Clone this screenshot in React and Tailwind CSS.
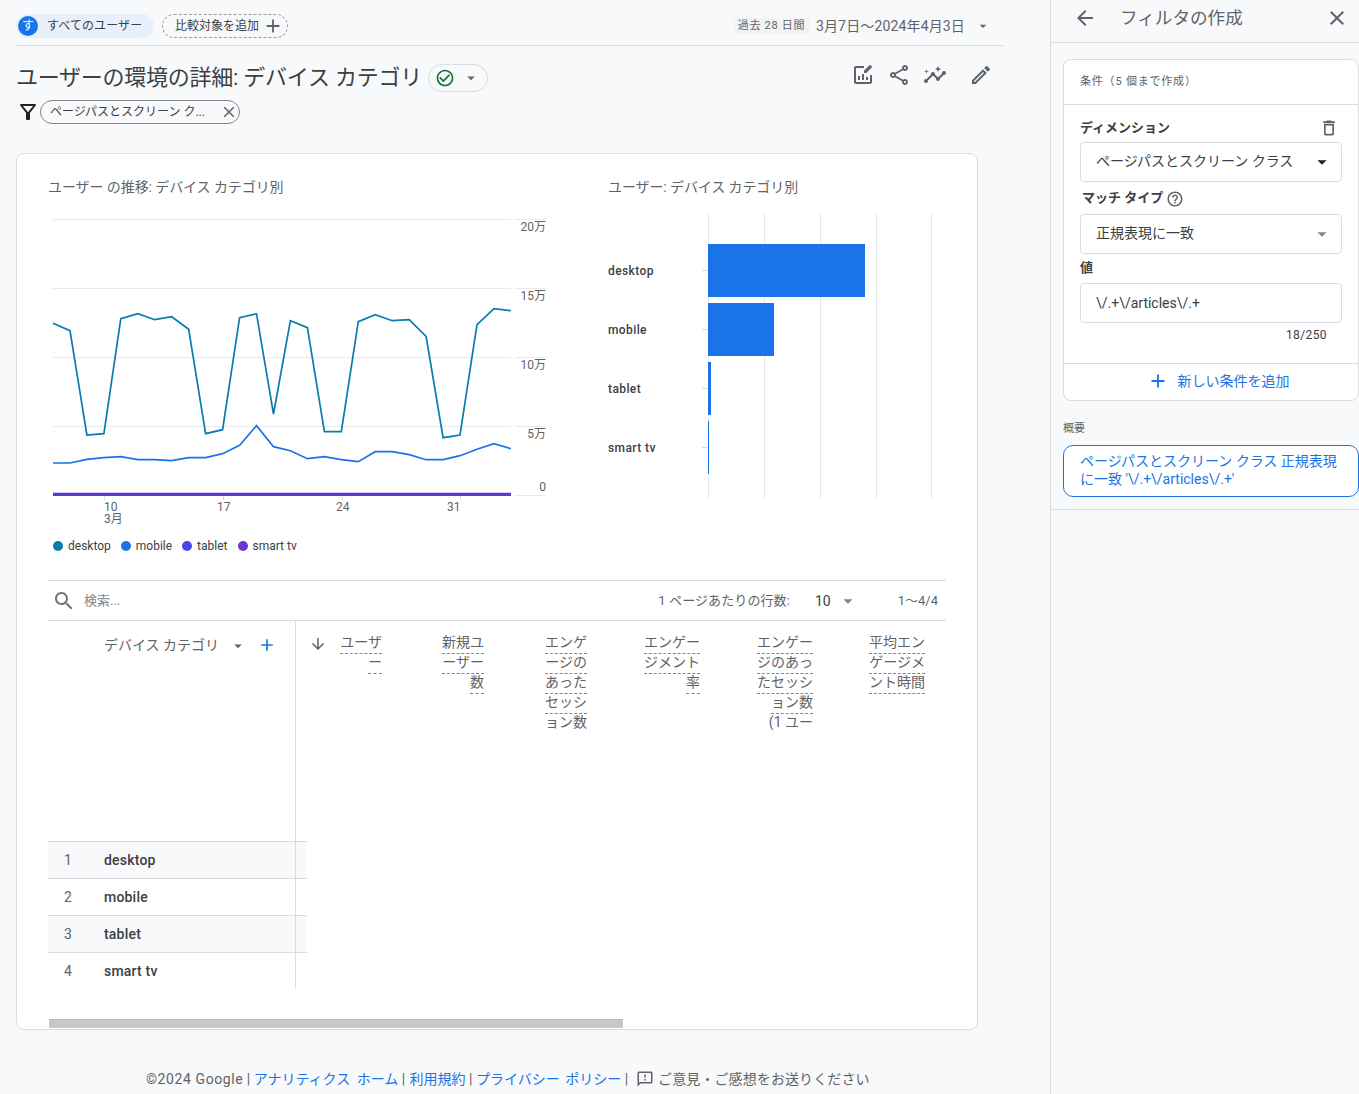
import React from "react";

const paths = {
  close: "M19 6.41L17.59 5 12 10.59 6.41 5 5 6.41 10.59 12 5 17.59 6.41 19 12 13.41 17.59 19 19 17.59 13.41 12z",
  back: "M20 11H7.83l5.59-5.59L12 4l-8 8 8 8 1.41-1.41L7.83 13H20v-2z",
  caret: "M7 10l5 5 5-5z",
  add: "M19 13h-6v6h-2v-6H5v-2h6V5h2v6h6v2z",
  down: "M20 12l-1.41-1.41L13 16.17V4h-2v12.17l-5.58-5.59L4 12l8 8 8-8z",
  search: "M15.5 14h-.79l-.28-.27C15.41 12.59 16 11.11 16 9.5 16 5.91 13.09 3 9.5 3S3 5.91 3 9.5 5.91 16 9.5 16c1.61 0 3.09-.59 4.23-1.57l.27.28v.79l5 4.99L20.49 19l-4.99-5zm-6 0C7.01 14 5 11.99 5 9.5S7.01 5 9.5 5 14 7.01 14 9.5 11.99 14 9.5 14z",
  share: "M18 16.08c-.76 0-1.44.3-1.96.77L8.91 12.7c.05-.23.09-.46.09-.7s-.04-.47-.09-.7l7.05-4.11c.54.5 1.25.81 2.04.81 1.66 0 3-1.34 3-3s-1.34-3-3-3-3 1.34-3 3c0 .24.04.47.09.7L8.04 9.81C7.5 9.31 6.79 9 6 9c-1.66 0-3 1.34-3 3s1.34 3 3 3c.79 0 1.5-.31 2.04-.81l7.12 4.16c-.05.21-.08.43-.08.65 0 1.61 1.31 2.92 2.92 2.92s2.92-1.31 2.92-2.92c0-1.61-1.31-2.92-2.92-2.92zM18 4c.55 0 1 .45 1 1s-.45 1-1 1-1-.45-1-1 .45-1 1-1zM6 13c-.55 0-1-.45-1-1s.45-1 1-1 1 .45 1 1-.45 1-1 1zm12 7.02c-.55 0-1-.45-1-1s.45-1 1-1 1 .45 1 1-.45 1-1 1z",
  edit: "M14.06 9.02l.92.92L5.92 19H5v-.92l9.06-9.06M17.66 3c-.25 0-.51.1-.7.29l-1.83 1.83 3.75 3.75 1.83-1.83c.39-.39.39-1.02 0-1.41l-2.34-2.34c-.2-.2-.45-.29-.71-.29zm-3.6 3.19L3 17.25V21h3.75L17.81 9.94l-3.75-3.75z",
  insights: "M21 8c-1.45 0-2.26 1.44-1.93 2.51l-3.55 3.56c-.3-.09-.74-.09-1.04 0l-2.55-2.55C12.27 10.45 11.46 9 10 9c-1.45 0-2.27 1.44-1.93 2.52l-4.56 4.55C2.44 15.74 1 16.55 1 18c0 1.1.9 2 2 2 1.45 0 2.26-1.44 1.93-2.51l4.55-4.56c.3.09.74.09 1.04 0l2.55 2.55C12.73 16.55 13.54 18 15 18c1.45 0 2.27-1.44 1.93-2.52l3.56-3.55c1.07.33 2.51-.48 2.51-1.93 0-1.1-.9-2-2-2zM15 9l.94-2.07L18 6l-2.06-.93L15 3l-.92 2.07L12 6l2.08.93zM3.5 11L4 9l2-.5L4 8l-.5-2L3 8l-2 .5L3 9z",
  filter: "M7 6h10l-5.01 6.3L7 6zm-2.75-.39C6.27 8.2 10 13 10 13v6c0 .55.45 1 1 1h2c.55 0 1-.45 1-1v-6s3.73-4.8 5.75-7.39C20.26 4.95 19.79 4 18.95 4H5.04c-.83 0-1.3.95-.79 1.61z",
  trash: "M16 9v10H8V9h8m-1.5-6h-5l-1 1H5v2h14V4h-3.5l-1-1zM18 7H6v12c0 1.1.9 2 2 2h8c1.1 0 2-.9 2-2V7z",
  help: "M11 18h2v-2h-2v2zm1-16C6.48 2 2 6.48 2 12s4.48 10 10 10 10-4.48 10-10S17.52 2 12 2zm0 18c-4.41 0-8-3.59-8-8s3.59-8 8-8 8 3.59 8 8-3.59 8-8 8zm0-14c-2.21 0-4 1.79-4 4h2c0-1.1.9-2 2-2s2 .9 2 2c0 2-3 1.75-3 5h2c0-2.25 3-2.5 3-5 0-2.21-1.79-4-4-4z",
  feedback: "M20 2H4c-1.1 0-1.99.9-1.99 2L2 22l4-4h14c1.1 0 2-.9 2-2V4c0-1.1-.9-2-2-2zm0 14H5.17L4 17.17V4h16v12zm-9-4h2v2h-2zm0-6h2v4h-2z",
  check: "M16.59 7.58L10 14.17l-3.59-3.58L5 12l5 5 8-8zM12 2C6.48 2 2 6.48 2 12s4.48 10 10 10 10-4.48 10-10S17.52 2 12 2zm0 18c-4.42 0-8-3.58-8-8s3.58-8 8-8 8 3.58 8 8-3.58 8-8 8z",
  chartEdit: "M19 12v7H5V5h8V3H5c-1.1 0-2 .9-2 2v14c0 1.1.9 2 2 2h14c1.1 0 2-.9 2-2v-7h-2zM7 13h2v4H7zm4-2h2v6h-2zm4 3h2v3h-2zM15.2 10H13V7.8L18.6 2.2c.3-.3.7-.3 1 0l1.2 1.2c.3.3.3.7 0 1L15.2 10z",
};

const Icon = ({ name, className }) => (
  <svg viewBox="0 0 24 24" fill="currentColor" className={className}>
    <path d={paths[name]} fillRule="evenodd" />
  </svg>
);

const desktopY = [323.3, 330.7, 435, 433.7, 318.7, 313.7, 319.7, 316.7, 329.3, 433.7, 429.7, 317.7, 313.7, 414, 320.7, 327.7, 431.7, 431.7, 321.7, 314.7, 320.7, 319.7, 336.3, 437.7, 435, 324.7, 308.7, 310.7];
const mobileY = [463, 463, 459.3, 457.7, 456.7, 459.7, 459.7, 460.7, 457.7, 457.7, 453.7, 445.3, 425.7, 446.7, 450.7, 458.7, 456.7, 459.7, 461.7, 451.7, 451.7, 454.7, 459.7, 459.7, 455.7, 449.3, 443.7, 448.7];
const toPoints = (ys) => ys.map((y, i) => `${(53 + i * 16.96).toFixed(1)},${y}`).join(" ");

const LineChart = () => (
  <svg viewBox="48 210 512 320" className="block w-[512px] h-[320px]">
    {[219, 288, 357, 426, 495].map((y) => (
      <g key={y} stroke="#e8eaed" strokeWidth="1">
        <line x1="53" x2="511" y1={y + 0.5} y2={y + 0.5} />
        <line x1="515" x2="546" y1={y + 0.5} y2={y + 0.5} />
      </g>
    ))}
    {[104, 223, 342, 460].map((x) => (
      <line key={x} x1={x + 0.5} x2={x + 0.5} y1="495" y2="500" stroke="#dadce0" />
    ))}
    <polyline points={toPoints(desktopY)} fill="none" stroke="#0a7bb0" strokeWidth="1.7" />
    <polyline points={toPoints(mobileY)} fill="none" stroke="#1a73e8" strokeWidth="1.7" />
    <line x1="53" x2="511" y1="494.4" y2="494.4" stroke="#5f35d6" strokeWidth="3.2" />
    <g fill="#5f6368" fontSize="12" textAnchor="end">
      <text x="546" y="231">20万</text>
      <text x="546" y="300">15万</text>
      <text x="546" y="369">10万</text>
      <text x="546" y="438">5万</text>
      <text x="546" y="491">0</text>
    </g>
    <g fill="#5f6368" fontSize="12">
      <text x="104" y="511">10</text>
      <text x="104" y="523">3月</text>
      <text x="217" y="511">17</text>
      <text x="336" y="511">24</text>
      <text x="447" y="511">31</text>
    </g>
  </svg>
);

const bars = [
  { label: "desktop", y: 244, x2: 865, tick: 270 },
  { label: "mobile", y: 303, x2: 774, tick: 329 },
  { label: "tablet", y: 362, x2: 711, tick: 388 },
  { label: "smart tv", y: 421, x2: 709, tick: 447 },
];

const BarChart = () => (
  <svg viewBox="600 210 350 290" className="block w-[350px] h-[290px]">
    {[708, 764, 820, 876, 931].map((x) => (
      <line key={x} x1={x + 0.5} x2={x + 0.5} y1="214" y2="498" stroke="#e3e5e8" strokeWidth="1" />
    ))}
    {bars.map((b) => (
      <g key={b.label}>
        <line x1="702" x2="708" y1={b.tick + 0.5} y2={b.tick + 0.5} stroke="#dadce0" />
        <rect x="708" y={b.y} width={b.x2 - 708} height="53" fill="#1a73e8" />
        <text x="608" y={b.tick + 5} fontSize="12" fontWeight="500" fill="#3c4043" letterSpacing="0.4">{b.label}</text>
      </g>
    ))}
  </svg>
);

const LegendItem = ({ color, label }) => (
  <div className="flex items-center gap-[5px]">
    <span className={`w-[10px] h-[10px] rounded-full ${color}`} />
    <span>{label}</span>
  </div>
);

const columns = [
  { width: "w-[86px]", lines: ["ユーザ", "ー"], lastPlain: false },
  { width: "w-[102px]", lines: ["新規ユ", "ーザー", "数"], lastPlain: false },
  { width: "w-[103px]", lines: ["エンゲ", "ージの", "あった", "セッシ", "ョン数"], lastPlain: true },
  { width: "w-[113px]", lines: ["エンゲー", "ジメント", "率"], lastPlain: false },
  { width: "w-[113px]", lines: ["エンゲー", "ジのあっ", "たセッシ", "ョン数", "(1 ユー"], lastPlain: true },
  { width: "w-[112px]", lines: ["平均エン", "ゲージメ", "ント時間"], lastPlain: false },
];

const rows = ["desktop", "mobile", "tablet", "smart tv"];

const MetricHeader = ({ col }) => (
  <div className={`${col.width} flex flex-col items-end pt-[13px] shrink-0`}>
    {col.lines.map((line, i) => (
      <span
        key={i}
        className={
          col.lastPlain && i === col.lines.length - 1
            ? "h-5 leading-4"
            : "h-5 leading-4 border-b border-dashed border-[#80868b]"
        }
      >
        {line}
      </span>
    ))}
  </div>
);

const Select = ({ label, dark }) => (
  <div className="h-10 border border-[#dadce0] rounded flex items-center justify-between pl-[15px] pr-[8px] text-sm text-[#3c4043]">
    <span className="pb-[2px]">{label}</span>
    <Icon name="caret" className={dark ? "w-[22px] h-[22px] text-[#202124]" : "w-[22px] h-[22px] text-[#80868b]"} />
  </div>
);

const Sidebar = () => (
  <aside className="w-[309px] shrink-0 border-l border-[#dadce0] text-[#3c4043]">
    <div className="h-[43px] border-b border-[#dadce0] flex items-center pl-[22px] pr-[10px] pb-[6px]">
      <Icon name="back" className="w-6 h-6 text-[#5f6368]" />
      <span className="ml-[23px] text-[17.6px] text-[#5f6368]">フィルタの作成</span>
      <Icon name="close" className="w-6 h-6 text-[#5f6368] ml-auto" />
    </div>
    <div className="pl-3 pt-4 border-b border-[#dadce0] h-[467px]">
      <div className="w-[296px] h-[342px] bg-white border border-[#dadce0] rounded-lg flex flex-col">
        <div className="h-[45px] border-b border-[#dadce0] flex items-center pl-4 text-[11px] tracking-[0.8px] text-[#5f6368]">条件（5 個まで作成）</div>
        <div className="px-4 flex-1">
          <div className="flex items-center justify-between h-[37px] pt-[9px]">
            <span className="text-[13px] font-bold">ディメンション</span>
            <Icon name="trash" className="w-5 h-5 text-[#5f6368] mr-[3px]" />
          </div>
          <Select label="ページパスとスクリーン クラス" dark />
          <div className="flex items-center h-8 pl-[2px] gap-[3px] text-[13px] font-bold">
            <span>マッチ タイプ</span>
            <Icon name="help" className="w-[18px] h-[18px] mt-px text-[#5f6368]" />
          </div>
          <Select label="正規表現に一致" />
          <div className="h-7 mb-px flex items-center text-[13px] font-bold">値</div>
          <div className="h-10 border border-[#dadce0] rounded flex items-center pl-[15px] text-sm">\/.+\/articles\/.+</div>
          <div className="text-right text-xs tracking-[0.4px] mt-[4px] pr-[15px] text-[#3c4043]">18/250</div>
        </div>
        <div className="h-[37px] border-t border-[#dadce0] flex items-center justify-center gap-[9px] text-sm text-[#1a73e8] shrink-0 pl-[14px] pb-[3px]">
          <Icon name="add" className="w-[22px] h-[22px]" />
          <span>新しい条件を追加</span>
        </div>
      </div>
      <div className="mt-[21px] mb-[10px] text-[11px] text-[#5f6368] leading-[13px]">概要</div>
      <div className="w-[296px] h-[52px] bg-white border border-[#1a73e8] rounded-[10px] px-4 pt-[6px] text-sm leading-[18px] text-[#1a73e8]">
        ページパスとスクリーン クラス 正規表現に一致 '\/.+\/articles\/.+'
      </div>
    </div>
  </aside>
);

export default function App() {
  return (
    <div className="flex w-[1359px] min-h-[1094px] bg-[#f8f9fb] font-['Roboto','Noto_Sans_CJK_JP',sans-serif]">
      <main className="w-[1050px] shrink-0">
        <div className="ml-4 w-[988px] h-[46px] border-b border-[#dadce0] flex items-center gap-2 pt-[14px] pb-[7px] text-xs text-[#3c4043]">
          <div className="h-6 w-[138px] rounded-full bg-[#e8f0fe] flex items-center pl-[2px]">
            <span className="w-5 h-5 rounded-full bg-[#1a73e8] text-white flex items-center justify-center">す</span>
            <span className="ml-[9px] tracking-[0.1px]">すべてのユーザー</span>
          </div>
          <div className="h-6 w-[126px] rounded-full border border-dashed border-[#9aa0a6] flex items-center pl-[12px]">
            <span>比較対象を追加</span>
            <Icon name="add" className="w-[22px] h-[22px] ml-[3px] text-[#5f6368]" />
          </div>
          <div className="ml-auto flex items-center pr-[13px] text-[#5f6368]">
            <span className="h-4 w-[77px] bg-[#f1f3f4] text-[11px] tracking-[0.7px] flex items-center justify-center">過去 28 日間</span>
            <span className="ml-[6px] text-sm tracking-[0.15px]">3月7日〜2024年4月3日</span>
            <Icon name="caret" className="w-4 h-4 ml-[10px]" />
          </div>
        </div>

        <div className="ml-4 w-[977px] h-[30px] mt-[16px] flex items-center text-[#3c4043]">
          <h1 className="text-[22px] tracking-[-0.25px] font-normal whitespace-nowrap">ユーザーの環境の詳細: デバイス カテゴリ</h1>
          <div className="ml-[6px] mt-[2px] w-[60px] h-[28px] rounded-full border border-[#dadce0] flex items-center pl-[6px] gap-[7px]">
            <Icon name="check" className="w-[20px] h-[20px] text-[#137333]" />
            <Icon name="caret" className="w-[18px] h-[18px] text-[#5f6368]" />
          </div>
          <div className="ml-auto flex items-center gap-3 text-[#5f6368] -mt-1">
            <Icon name="chartEdit" className="w-6 h-6" />
            <Icon name="share" className="w-6 h-6" />
            <Icon name="insights" className="w-6 h-6" />
            <Icon name="edit" className="w-6 h-6 ml-[10px]" />
          </div>
        </div>

        <div className="ml-4 mt-2 h-6 flex items-center">
          <Icon name="filter" className="w-6 h-6 text-[#202124]" />
          <div className="w-[200px] h-6 rounded-full border border-[#80868b] flex items-center pl-[9px] text-xs text-[#3c4043]">
            <span>ページパスとスクリーン ク...</span>
            <Icon name="close" className="w-[18px] h-[18px] text-[#5f6368] ml-auto mr-[1px]" />
          </div>
        </div>

        <section className="ml-4 mt-[29px] w-[962px] h-[877px] bg-white border border-[#dadce0] rounded-lg px-[31px]">
          <div className="h-[426px] flex">
            <div className="w-[560px] shrink-0 pt-[23px]">
              <h2 className="text-sm tracking-[-0.08px] leading-5 text-[#5f6368] font-normal">ユーザー の推移: デバイス カテゴリ別</h2>
              <div className="mt-[13px]">
                <LineChart />
              </div>
              <div className="mt-[9px] ml-[5px] flex gap-[10px] text-xs leading-[14px] text-[#3c4043]">
                <LegendItem color="bg-[#0a7bb0]" label="desktop" />
                <LegendItem color="bg-[#1a73e8]" label="mobile" />
                <LegendItem color="bg-[#4a47ea]" label="tablet" />
                <LegendItem color="bg-[#7232d0]" label="smart tv" />
              </div>
            </div>
            <div className="pt-[23px] min-w-0">
              <h2 className="text-sm tracking-[-0.1px] leading-5 text-[#5f6368] font-normal">ユーザー: デバイス カテゴリ別</h2>
              <div className="mt-[13px] -ml-2">
                <BarChart />
              </div>
            </div>
          </div>

          <div className="h-[41px] border-y border-[#dadce0] flex items-center text-[13px] text-[#5f6368]">
            <Icon name="search" className="w-6 h-6 ml-1 text-[#70757a]" />
            <span className="ml-2 text-[#80868b]">検索...</span>
            <span className="ml-auto tracking-[0.1px]">1 ページあたりの行数:</span>
            <span className="ml-[25px] text-sm text-[#3c4043]">10</span>
            <Icon name="caret" className="w-[22px] h-[22px] ml-[6px] text-[#80868b]" />
            <span className="ml-[39px] mr-2">1〜4/4</span>
          </div>

          <div className="flex h-[220px] text-sm text-[#5f6368]">
            <div className="w-[248px] shrink-0 border-r border-[#dadce0] flex items-start justify-end pt-[14px] pr-[18px]">
              <span className="leading-5">デバイス カテゴリ</span>
              <Icon name="caret" className="w-[18px] h-[18px] mt-[2px] ml-[10px]" />
              <Icon name="add" className="w-5 h-5 ml-[10px] text-[#1a73e8]" />
            </div>
            <div className="relative flex">
              <Icon name="down" className="absolute left-[13px] top-[14px] w-[18px] h-[18px] text-[#5f6368]" />
              {columns.map((col) => (
                <MetricHeader key={col.lines[0] + col.width} col={col} />
              ))}
            </div>
          </div>

          {rows.map((row, i) => (
            <div key={row} className="flex w-[259px] h-[37px] text-sm text-[#3c4043]">
              <div className={`w-[248px] shrink-0 border-t border-r border-[#dadce0] flex items-center ${i % 2 === 0 ? "bg-[#f8f9fb]" : ""}`}>
                <span className="w-14 pl-4 text-[#5f6368]">{i + 1}</span>
                <span className="font-medium tracking-[0.2px]">{row}</span>
              </div>
              <div className={`flex-1 border-t border-[#dadce0] ${i % 2 === 0 ? "bg-[#f8f9fb]" : ""}`} />
            </div>
          ))}

          <div className="mt-[30px] ml-px w-[574px] h-[9px] bg-[#c8c8c8] border-t border-[#bdbdbd]" />
        </section>

        <footer className="mt-10 pl-[146px] flex items-center h-[18px] text-sm text-[#5f6368] whitespace-nowrap">
          <span className="tracking-[0.6px]">©2024 Google</span>
          <span>&nbsp;|&nbsp;</span>
          <a className="text-[#1a73e8] [word-spacing:3px]">アナリティクス ホーム</a>
          <span>&nbsp;|&nbsp;</span>
          <a className="text-[#1a73e8] ml-px">利用規約</a>
          <span>&nbsp;|&nbsp;</span>
          <a className="text-[#1a73e8] [word-spacing:2px]">プライバシー ポリシー</a>
          <span>&nbsp;|</span>
          <Icon name="feedback" className="w-[18px] h-[18px] ml-[8px]" />
          <span className="ml-[4px] tracking-[0.1px]">ご意見・ご感想をお送りください</span>
        </footer>
      </main>
      <Sidebar />
    </div>
  );
}
